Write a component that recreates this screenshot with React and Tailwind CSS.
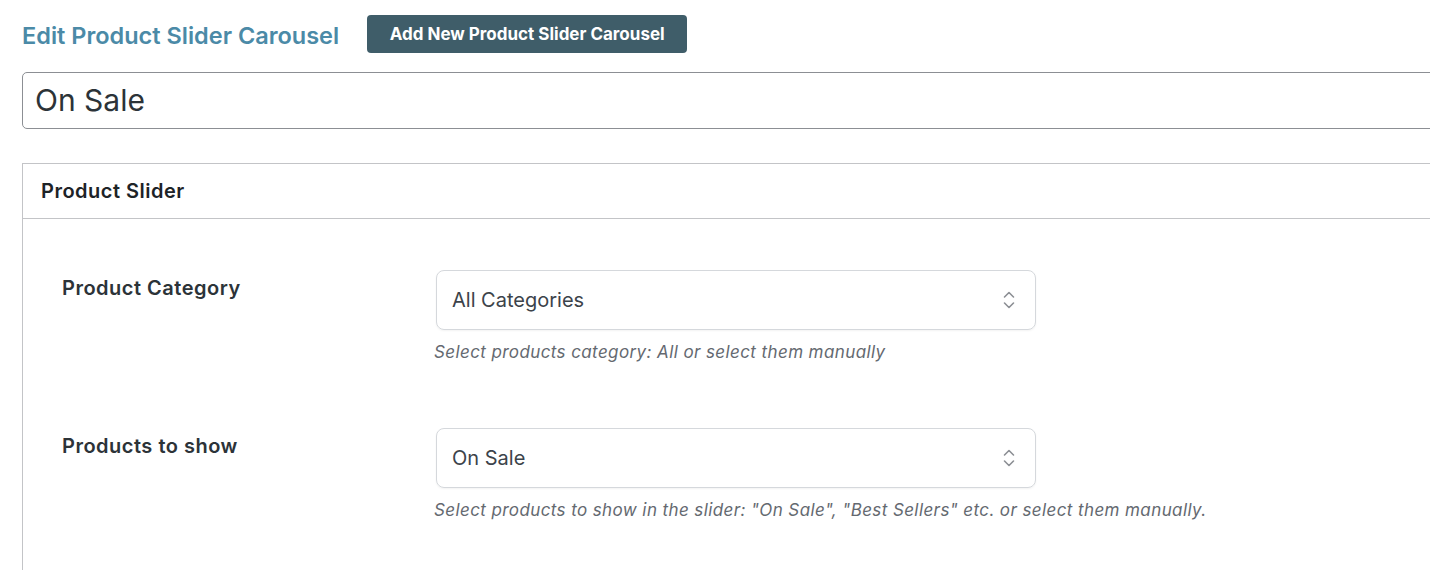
import React from "react";

function Chevrons() {
  return (
    <svg width="14" height="22" viewBox="0 0 14 22" fill="none" stroke="#8c8f94" strokeWidth="1.6" strokeLinecap="round" strokeLinejoin="round">
      <path d="M2.5 8 L7 3.5 L11.5 8" />
      <path d="M2.5 14 L7 18.5 L11.5 14" />
    </svg>
  );
}

function Row({ label, value, help, top }) {
  return (
    <div className={`flex ${top}`}>
      <div className="w-[413px] pl-[39px] pt-[4px] text-[20px] leading-[28px] font-semibold tracking-[0.5px] text-[#2c3338]">{label}</div>
      <div className="flex flex-col">
        <div className="w-[600px] h-[60px] border border-[#d5d8dc] rounded-[8px] flex items-center justify-between pl-[15px] pr-[19px] text-[20px] text-[#3c434a] shadow-[0_1px_2px_rgba(0,0,0,0.05)]">
          <span>{value}</span>
          <Chevrons />
        </div>
        <div className="mt-[10px] -ml-[2px] text-[17px] leading-[24px] italic tracking-[0.4px] text-[#646970]">{help}</div>
      </div>
    </div>
  );
}

export default function App() {
  return (
    <div className="w-[1430px] h-[570px] overflow-hidden bg-white" style={{ fontFamily: "Inter, 'Noto Sans', sans-serif" }}>
      <div className="pl-[22px] pt-[15px]">
        <div className="flex items-center h-[38px]">
          <h1 className="text-[23.5px] leading-[32px] font-semibold text-[#4b8aa7] pt-[4px]">Edit Product Slider Carousel</h1>
          <button className="ml-[28px] w-[320px] h-[38px] bg-[#3f5d69] rounded-[4px] text-white text-[17px] font-bold pt-[2px]">Add New Product Slider Carousel</button>
        </div>
        <div className="mt-[19px] w-[1430px] h-[57px] border border-[#8c8f94] rounded-[5px] flex items-center pl-[12px] text-[30px] text-[#2c3338]">On Sale</div>
        <div className="mt-[34px] w-[1430px] h-[420px] border border-[#c3c4c7]">
          <div className="h-[55px] border-b border-[#c3c4c7] flex items-center pl-[18px] text-[20px] font-semibold tracking-[0.5px] text-[#1d2327]">Product Slider</div>
          <Row top="mt-[51px]" label="Product Category" value="All Categories" help="Select products category: All or select them manually" />
          <Row top="mt-[64px]" label="Products to show" value="On Sale" help={'Select products to show in the slider: "On Sale", "Best Sellers" etc. or select them manually.'} />
        </div>
      </div>
    </div>
  );
}
